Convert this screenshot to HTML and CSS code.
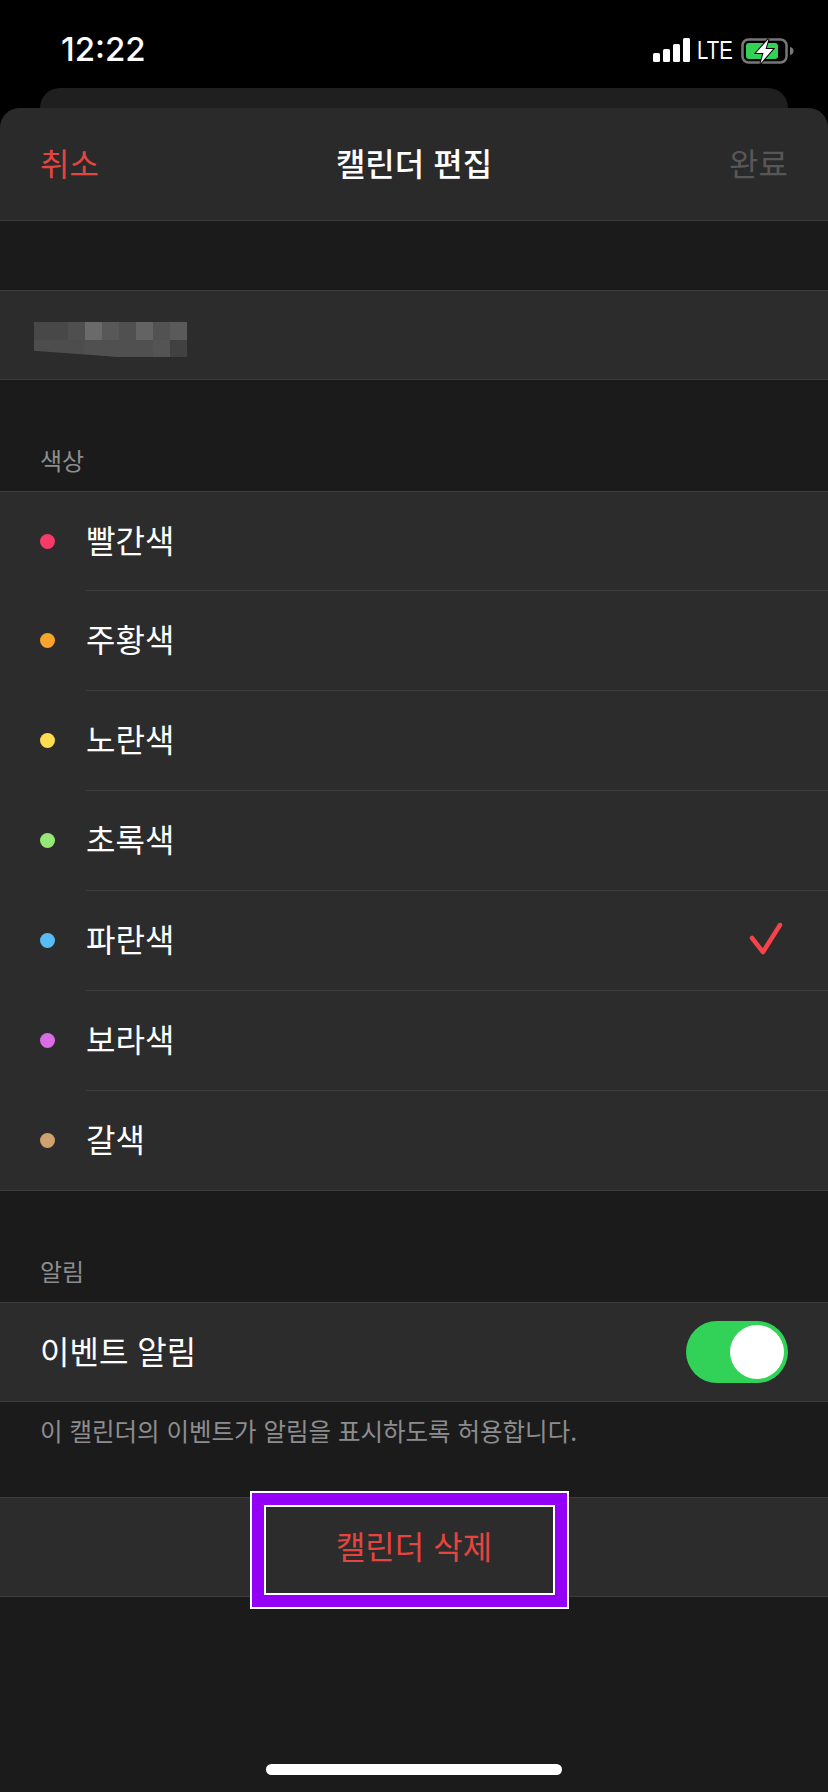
FILE: index.html
```html
<!DOCTYPE html>
<html lang="ko">

<head>
    <meta charset="UTF-8">
    <meta name="viewport" content="width=device-width, initial-scale=1.0">
    <title>캘린더 편집</title>
    <link rel="stylesheet" href="styles.css">
</head>

<body>
    <header class="status-bar">
        <span class="clock">12:22</span>
        <div class="status-icons">
            <svg class="signal" width="37" height="24" viewBox="0 0 37 24">
                <rect x="0" y="15" width="7" height="9" rx="1.5" />
                <rect x="10" y="11" width="7" height="13" rx="1.5" />
                <rect x="20" y="6" width="7" height="18" rx="1.5" />
                <rect x="30" y="0" width="7" height="24" rx="1.5" />
            </svg>
            <span class="network">LTE</span>
            <svg class="battery" width="54" height="26" viewBox="0 0 54 26">
                <rect x="1.500" y="1.500" width="44" height="23" rx="6" fill="none" stroke="#77777a" stroke-width="2.500" />
                <rect x="5" y="5" width="32" height="16" rx="3" fill="#32d158" />
                <path d="M49 9c2.500.6 3.500 2 3.500 4s-1 3.400-3.500 4z" fill="#77777a" />
                <path d="M27.500 1 15 15h7.500l-3 10.500L32 11h-7.500z" fill="#fff" stroke="#000" stroke-width="2" paint-order="stroke" />
            </svg>
        </div>
    </header>
    <div class="back-card"></div>
    <main class="sheet">
        <nav class="nav-bar">
            <span class="nav-cancel">취소</span>
            <span class="nav-title">캘린더 편집</span>
            <span class="nav-done">완료</span>
        </nav>
        <section class="group name-group">
            <div class="name-row">
                <div class="name-blur"></div>
            </div>
        </section>
        <h2 class="group-label">색상</h2>
        <ul class="group color-list">
            <li class="color-row"><span class="dot dot-red"></span><div class="color-name">빨간색</div></li>
            <li class="color-row"><span class="dot dot-orange"></span><div class="color-name">주황색</div></li>
            <li class="color-row"><span class="dot dot-yellow"></span><div class="color-name">노란색</div></li>
            <li class="color-row"><span class="dot dot-green"></span><div class="color-name">초록색</div></li>
            <li class="color-row">
                <span class="dot dot-blue"></span>
                <div class="color-name">파란색
                    <svg class="check" width="36" height="36" viewBox="0 0 36 36">
                        <path d="M4 18 15 32 32 5" fill="none" stroke="#f6434a" stroke-width="4.500" stroke-linecap="round" stroke-linejoin="round" />
                    </svg>
                </div>
            </li>
            <li class="color-row"><span class="dot dot-purple"></span><div class="color-name">보라색</div></li>
            <li class="color-row"><span class="dot dot-brown"></span><div class="color-name">갈색</div></li>
        </ul>
        <h2 class="group-label">알림</h2>
        <section class="group">
            <div class="alert-row">
                <span>이벤트 알림</span>
                <div class="toggle"><span class="toggle-knob"></span></div>
            </div>
        </section>
        <p class="group-note">이 캘린더의 이벤트가 알림을 표시하도록 허용합니다.</p>
        <section class="group delete-row">
            <span class="delete-text">캘린더 삭제</span>
            <!-- 스크린샷 위에 표시된 강조 박스 -->
            <div class="highlight-box"></div>
        </section>
        <div class="home-indicator"></div>
    </main>
</body>

</html>
```
FILE: styles.css
```css
* {
    margin: 0;
    padding: 0;
    box-sizing: border-box;
}

body {
    width: 828px;
    height: 1792px;
    overflow: hidden;
    background-color: #000;
    color: #fff;
    font-family: "Noto Sans CJK KR", "Noto Sans", sans-serif;
}

.status-bar {
    height: 88px;
    padding: 0 33px 0 61px;
    display: flex;
    justify-content: space-between;
    align-items: center;
}

.clock {
    font-family: Inter, "Liberation Sans", sans-serif;
    font-size: 33px;
    font-weight: 500;
    line-height: 1;
    margin-top: 10px;
}

.status-icons {
    display: flex;
    align-items: flex-end;
    margin-top: 11px;
}

.signal {
    fill: #fff;
}

.network {
    width: 37px;
    margin: 0 7px;
    font-family: "Liberation Sans", sans-serif;
    font-size: 26px;
    line-height: 24px;
    white-space: nowrap;
    transform: scaleX(0.78);
    transform-origin: left center;
}

.battery {
    display: block;
    margin-bottom: -2px;
}

.back-card {
    height: 20px;
    margin: 0 40px;
    background-color: #1f1f1f;
    border-radius: 20px 20px 0 0;
}

.sheet {
    height: 1684px;
    background-color: #1b1b1b;
    border-radius: 20px 20px 0 0;
    display: flex;
    flex-direction: column;
    overflow: hidden;
}

.nav-bar {
    height: 113px;
    padding: 0 40px 4px;
    background-color: #2a2a2a;
    border-bottom: 1px solid #3b3b3b;
    display: flex;
    justify-content: space-between;
    align-items: center;
    font-size: 32px;
    line-height: 1;
}

.nav-cancel {
    color: #e5443f;
}

.nav-title {
    font-weight: 500;
}

.nav-done {
    color: #575757;
}

.group {
    background-color: #2c2c2c;
    border-top: 1px solid #3d3d3d;
    border-bottom: 1px solid #3d3d3d;
}

.name-group {
    margin-top: 69px;
}

.name-row {
    height: 88px;
    padding: 31px 0 0 34px;
}

/* 이름은 스크린샷에서 모자이크 처리되어 있음 */
.name-blur {
    width: 153px;
    height: 35px;
    clip-path: polygon(0 0, 100% 0, 100% 100%, 55% 100%, 0 82%);
    background:
        linear-gradient(90deg, #484848 0 34px, #4f4f4f 34px 51px, #6a6a6a 51px 68px, #585858 68px 85px, #505050 85px 102px, #636363 102px 119px, #525252 119px 136px, #5a5a5a 136px) top / 100% 18px no-repeat,
        linear-gradient(90deg, #4d4d4d 0 51px, #505050 51px 119px, #545454 119px 136px, #414141 136px) bottom / 100% 17px no-repeat;
}

.group-label {
    height: 111px;
    padding: 0 40px 19px;
    display: flex;
    align-items: flex-end;
    font-size: 24px;
    font-weight: 400;
    line-height: 1;
    color: #8d8d8f;
}

.color-list {
    list-style: none;
}

.color-row {
    height: 100px;
    padding-left: 40px;
    display: flex;
    align-items: center;
    gap: 31px;
}

.color-row:first-child,
.color-row:last-child {
    height: 99px;
}

.color-name {
    flex: 1;
    height: 100%;
    padding: 0 44px 5px 0;
    display: flex;
    justify-content: space-between;
    align-items: center;
    font-size: 32px;
    border-bottom: 1px solid #3d3d3d;
}

.color-row:last-child .color-name {
    border-bottom: 0;
}

.dot {
    width: 15px;
    height: 15px;
    margin-top: -1px;
    border-radius: 50%;
}

.dot-red { background-color: #f73b69; }
.dot-orange { background-color: #f8a42d; }
.dot-yellow { background-color: #fddc4f; }
.dot-green { background-color: #97e678; }
.dot-blue { background-color: #58bdf5; }
.dot-purple { background-color: #d96de8; }
.dot-brown { background-color: #cfa16e; }

.alert-row {
    height: 98px;
    padding: 0 40px;
    display: flex;
    justify-content: space-between;
    align-items: center;
    font-size: 32px;
}

.alert-row span:first-child {
    margin-bottom: 5px;
}

.toggle {
    width: 102px;
    height: 62px;
    padding: 4px;
    display: flex;
    justify-content: flex-end;
    background-color: #32d158;
    border-radius: 31px;
}

.toggle-knob {
    width: 54px;
    height: 54px;
    background-color: #fff;
    border-radius: 50%;
}

.group-note {
    height: 95px;
    padding: 11px 40px 0;
    font-size: 24.500px;
    line-height: 36px;
    color: #8d8d8f;
}

.delete-row {
    position: relative;
    height: 100px;
    padding-bottom: 4px;
    display: flex;
    justify-content: center;
    align-items: center;
    font-size: 32px;
    color: #e5443f;
}

.highlight-box {
    position: absolute;
    left: 250px;
    top: -7px;
    width: 319px;
    height: 118px;
    border: 14px solid #9300f5;
    outline: 2px solid #fff;
    outline-offset: -2px;
    box-shadow: inset 0 0 0 2px #fff;
}

.home-indicator {
    width: 296px;
    height: 11px;
    margin: auto auto 17px;
    background-color: #fff;
    border-radius: 6px;
}
```
